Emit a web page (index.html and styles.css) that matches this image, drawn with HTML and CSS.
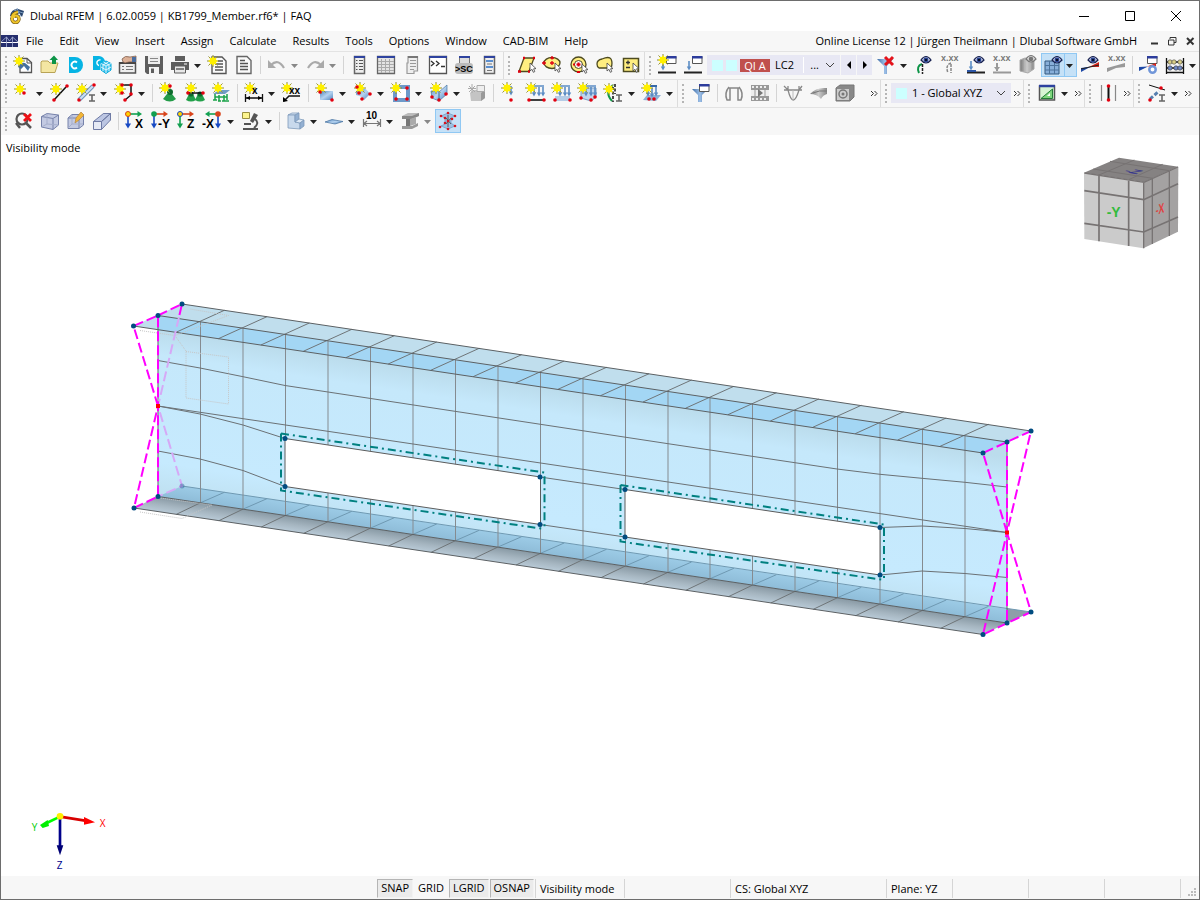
FILE: index.html
```html
<!DOCTYPE html>
<html lang="en">
<head>
<meta charset="utf-8">
<title>Dlubal RFEM | 6.02.0059 | KB1799_Member.rf6* | FAQ</title>
<link rel="stylesheet" href="styles.css">
</head>
<body>
<svg class="defs" width="0" height="0" aria-hidden="true">
  <defs>
    <linearGradient id="blue" x1="0" y1="0" x2="1" y2="1"><stop offset="0" stop-color="#4d83bd"/><stop offset=".5" stop-color="#b5d3f0"/><stop offset="1" stop-color="#4d83bd"/></linearGradient>
    <linearGradient id="funnelFill" x1="0" x2="1"><stop offset="0" stop-color="#3f6ea8"/><stop offset=".5" stop-color="#9dc0e8"/><stop offset="1" stop-color="#345f98"/></linearGradient>
    <linearGradient id="grey" x1="0" x2="1"><stop offset="0" stop-color="#777"/><stop offset=".5" stop-color="#ccc"/><stop offset="1" stop-color="#888"/></linearGradient>
    <g id="star"><path d="M0-6V6M-6 0H6M-4.500-4.500 4.500 4.500M-4.500 4.500 4.500-4.500" stroke="#8a8740" stroke-width="1"/><path d="M0-5 1.300-3 3.500-3.500 3-1.300 5 0 3 1.300 3.500 3.500 1.300 3 0 5-1.300 3-3.500 3.500-3 1.300-5 0-3-1.300-3.500-3.500-1.300-3Z" fill="#fff000"/></g>
    <g id="dot"><circle r="1.800" fill="#e3000f"/></g>
    <g id="eye"><path d="M-5 0Q0-7 5 0 0 6-5 0Z" fill="#c3cbe6" stroke="#16204f" stroke-width="1.200"/><circle r="2.400" fill="#27418f"/><circle r="1" fill="#000"/></g>
    <g id="eyeOff"><path d="M-5 0Q0-7 5 0 0 6-5 0Z" fill="#ddd" stroke="#777" stroke-width="1.200"/><circle r="2.300" fill="#777"/></g>
    <g id="win"><path d="M.5.500H10V7.500H.5Z" fill="#fff" stroke="#555"/><path d="M0 0H10.500V2.500H0Z" fill="#2c3c9c"/></g>
    <g id="cursor"><path d="M0 0V8L2 6.300 3.300 9.300 4.800 8.600 3.600 5.800 6 5.600Z" fill="#fff" stroke="#444" stroke-width=".8"/></g>
    <g id="ibeam"><path d="M0 0H6M0 6H6M3 0V6" stroke="#666" stroke-width="1.600" fill="none"/></g>
    <g id="drop"><path d="M0 0V7" stroke="#5b8cc4" stroke-width="1.600"/><path d="M-2.200 5.500H2.200L0 9.500Z" fill="#5b8cc4"/></g>
    <g id="caret"><path d="M1 4H8L4.500 8Z"/></g>
    <g id="more"><path d="M1 1 3.500 3.500 1 6M4.500 1 7 3.500 4.500 6" fill="none" stroke="#333"/></g>
    <g id="arrR"><path d="M0 0H10" stroke="currentColor" stroke-width="1.600"/><path d="M8.500-3 13 0 8.500 3Z" fill="currentColor"/></g>
    <g id="arrD"><path d="M0 0V10" stroke="currentColor" stroke-width="1.600"/><path d="M-3 8.500 0 13.500 3 8.500Z" fill="currentColor"/></g>
    <g id="cone"><path d="M-2-3H2L5 3Q0 6-5 3Z" fill="#22a04a"/><circle cy="-3" r="2.600" fill="#0c6b2c"/></g>
  </defs>
</svg>

<div class="window">
<header class="titlebar">
  <svg class="appicon" viewBox="0 0 16 16"><path d="M1 8Q2 1 9 1L15 3 13 9 10 5 7 9Z" fill="#28456d"/><path d="M5 2 14 5M3 5 12 8M8 0 10 6" stroke="#7c9cc0" fill="none"/><path d="M9 4Q3 5 3 10.500A3.500 3.500 0 1 0 6.500 7.500Q5 7.500 5 10" fill="none" stroke="#765a10" stroke-width="3.400"/><path d="M9 4Q3 5 3 10.500A3.500 3.500 0 1 0 6.500 7.500Q5 7.500 5 10" fill="none" stroke="#efc52b" stroke-width="2.200"/></svg>
  <h1>Dlubal RFEM | 6.02.0059 | KB1799_Member.rf6* | FAQ</h1>
  <div class="winbtns">
    <button aria-label="Minimize"><svg viewBox="0 0 12 12"><path d="M1 6.500H11"/></svg></button>
    <button aria-label="Maximize"><svg viewBox="0 0 12 12"><path d="M1.500 1.500H10.500V10.500H1.500Z"/></svg></button>
    <button aria-label="Close"><svg viewBox="0 0 12 12"><path d="M1 1 11 11M11 1 1 11"/></svg></button>
  </div>
</header>

<nav class="menubar" aria-label="Main menu">
  <svg class="docicon" viewBox="0 0 17 12"><path d="M0 0H17V12H0Z" fill="#252e6d"/><path d="M0 7.500H17" stroke="#fff" fill="none"/><path d="M5.500 2V12M11.500 2V12M5.500 2 0 7M5.500 2 8.500 6 11.500 2 17 7" stroke="#aab2d8" stroke-width=".8" fill="none"/></svg>
  <button>File</button><button>Edit</button><button>View</button><button>Insert</button><button>Assign</button><button>Calculate</button><button>Results</button><button>Tools</button><button>Options</button><button>Window</button><button>CAD-BIM</button><button>Help</button>
  <span class="license">Online License 12 | Jürgen Theilmann | Dlubal Software GmbH</span>
  <button class="mdi" aria-label="Minimize document"><svg viewBox="0 0 10 10"><path d="M2 7.500H9" stroke-width="2"/></svg></button>
  <button class="mdi" aria-label="Restore document"><svg viewBox="0 0 10 10"><path d="M3 3V1.500H9V6.500H7M1.500 4H7V9H1.500Z"/></svg></button>
  <button class="mdi" aria-label="Close document"><svg viewBox="0 0 10 10"><path d="M2 2 8.500 8.500M8.500 2 2 8.500" stroke-width="2"/></svg></button>
</nav>

<div class="toolbar">
  <div class="group">
    <button class="ic" aria-label="New model"><svg viewBox="0 0 22 22"><path d="M7 4.500H14L18.500 8.500V18.500H7Z" fill="#fff" stroke="#555" stroke-width="1.300"/><path d="M14 4V9H18" fill="none" stroke="#555"/><path d="M5 13Q6 8 12 9L17 13 15 17 11 12 8 15Z" fill="#45719f"/><use href="#star" x="6" y="7"/></svg></button>
    <button class="ic" aria-label="Open"><svg viewBox="0 0 22 22"><path d="M2 8V18.500H16L19 9H11L9 7H3Z" fill="#f4e6a2" stroke="#b8a356"/><path d="M13 10V6H10.500L15 1.500 19 6H17V10Z" fill="#0c9447"/></svg></button>
    <button class="ic" aria-label="Dlubal Center"><svg viewBox="0 0 22 22"><path d="M4 3H10A8 8 0 0 1 10 19H4Z" fill="#06b4e4"/><path d="M12 8.500A3.300 3.300 0 1 0 12 13.500" fill="none" stroke="#fff" stroke-width="1.800"/></svg></button>
    <button class="ic" aria-label="Model manager"><svg viewBox="0 0 22 22"><path d="M2 2H8A7 7 0 0 1 14 7L9 10V16H2Z" fill="#06b4e4"/><path d="M9.500 6A2.700 2.700 0 1 0 8 11.500" fill="none" stroke="#fff" stroke-width="1.400"/><path d="M15 7 20 9.500V16L15 19.500 10 16V9.500Z" fill="#35c0ec" stroke="#06a9dc"/><path d="M10 9.500 15 12 20 9.500M15 12V19M12.500 8 18 11V17M17.500 8 12 11V17M10 13 15 16 20 13" fill="none" stroke="#fff" stroke-width=".8"/></svg></button>
    <button class="ic" aria-label="Block manager"><svg viewBox="0 0 22 22"><path d="M2.500 9H18.500V19H2.500Z" fill="#eee" stroke="#555" stroke-width="1.500"/><path d="M2 9H19" stroke="#444" stroke-width="2"/><path d="M5 5Q8 1 13 3L19 2V8H12L8 9 6 8Z" fill="#dcb096" stroke="#705040" stroke-width=".7"/><path d="M15 3H19V8H15Z" fill="#4a6ea0"/><path d="M5 12.500H7M5 15.500H7M9 12.500H16M9 15.500H16" stroke="#777"/></svg></button>
    <button class="ic" aria-label="Save"><svg viewBox="0 0 22 22"><path d="M2 2H20V20H4L2 18Z" fill="#5e5e5e"/><path d="M5 2H17V10H5Z" fill="#eee"/><path d="M7 4.500H15M7 7.500H15" stroke="#888" stroke-width="1.200"/><path d="M6 13H16V20H6Z" fill="#f3f3f3"/><path d="M8 14.500H11V19H8Z" fill="#5e5e5e"/></svg></button>
    <button class="ic" aria-label="Print"><svg viewBox="0 0 22 22"><path d="M6 2H16V7H6Z" fill="#5e5e5e"/><path d="M2 8H20V16H2Z" fill="#5e5e5e"/><path d="M5.500 12H16.500V19H5.500Z" fill="#e8e8e8" stroke="#5e5e5e"/><path d="M7 15H15" stroke="#5e5e5e" stroke-width="1.500"/><path d="M15 10H18" stroke="#fff"/></svg></button>
    <button class="dd" aria-label="Print options"><svg viewBox="0 0 9 11"><use href="#caret"/></svg></button>
    <button class="ic" aria-label="New report"><svg viewBox="0 0 22 22"><path d="M5 3H15L19 7V19.500H5Z" fill="#fafafa" stroke="#555" stroke-width="1.400"/><path d="M11 7H16M8 10H16M8 13H16M8 16H16" stroke="#555" stroke-width="1.300"/><use href="#star" x="6" y="7"/></svg></button>
    <button class="ic" aria-label="Report"><svg viewBox="0 0 22 22"><path d="M4 2.500H14L18 6.500V19.500H4Z" fill="#fafafa" stroke="#666" stroke-width="1.400"/><path d="M7 6.500H12M7 9.500H15M7 12.500H15M7 15.500H15" stroke="#555" stroke-width="1.300"/></svg></button>
    <span class="sep"></span>
    <button class="ic" aria-label="Undo"><svg viewBox="0 0 22 22"><path d="M5 11Q12 4 18 14" fill="none" stroke="#aaa" stroke-width="2.200"/><path d="M2 6V14H10Z" fill="#aaa"/></svg></button>
    <button class="dd off" aria-label="Undo list"><svg viewBox="0 0 9 11"><use href="#caret"/></svg></button>
    <button class="ic" aria-label="Redo"><svg viewBox="0 0 22 22"><path d="M17 11Q10 4 4 14" fill="none" stroke="#aaa" stroke-width="2.200"/><path d="M20 6V14H12Z" fill="#aaa"/></svg></button>
    <button class="dd off" aria-label="Redo list"><svg viewBox="0 0 9 11"><use href="#caret"/></svg></button>
    <span class="sep"></span>
    <button class="ic" aria-label="Navigator"><svg viewBox="0 0 22 22"><path d="M5.500 2.500H15.500V19.500H5.500Z" fill="#eee" stroke="#666" stroke-width="1.500"/><path d="M5 3H16" stroke="#2e439f" stroke-width="2"/><path d="M7 6.500H8.500M7 9.500H8.500M7 12.500H8.500M7 15.500H8.500M10 6.500H14M10 9.500H14M10 12.500H14M10 15.500H14" stroke="#555"/></svg></button>
    <button class="ic" aria-label="Tables"><svg viewBox="0 0 22 22"><path d="M2.500 2.500H19.500V19.500H2.500Z" fill="#e4e4e4" stroke="#666" stroke-width="1.300"/><path d="M2 3H20" stroke="#2e439f" stroke-width="2"/><path d="M3 7.500H19M3 10.500H19M3 13.500H19M3 16.500H19M6.500 5V19M10.500 5V19M14.500 5V19" stroke="#aaa"/></svg></button>
    <button class="ic" aria-label="Table navigator"><svg viewBox="0 0 22 22"><path d="M7 2.500H16.500V17H13V19.500H6V9H7Z" fill="#eee" stroke="#999" stroke-width="1.200"/><path d="M7 3H17" stroke="#777" stroke-width="2"/><path d="M9 6.500H15M9 9.500H15M9 12.500H15M9 15.500H13" stroke="#999"/></svg></button>
    <button class="ic" aria-label="Console"><svg viewBox="0 0 22 22"><path d="M2.500 2.500H19.500V19.500H2.500Z" fill="#fff" stroke="#555" stroke-width="1.300"/><path d="M2 3H20" stroke="#2e439f" stroke-width="2"/><path d="M4 7 7 9.500 4 12M9 7 12 9.500 9 12M14 12.500H18" fill="none" stroke="#333" stroke-width="1.300"/></svg></button>
    <button class="ic" aria-label="Script console"><svg viewBox="0 0 22 22"><path d="M6.500 2.500H16.500V10H6.500Z" fill="#ddd" stroke="#777"/><path d="M6 3H17" stroke="#2e439f" stroke-width="2"/><rect x="2" y="9" width="18" height="11" rx="3" fill="#bbb"/><text class="tiny" x="2" y="18">&gt;SC</text></svg></button>
    <button class="ic" aria-label="Control panel"><svg viewBox="0 0 22 22"><path d="M5.500 2.500H15.500V19.500H5.500Z" fill="#eee" stroke="#666" stroke-width="1.500"/><path d="M5 3H16" stroke="#2e439f" stroke-width="2"/><path d="M7 7H14M7 13H14" stroke="#5b8fd0" stroke-width="2"/><path d="M8 10H13M8 16.500H13" stroke="#777"/></svg></button>
  </div>
  <div class="group">
    <button class="ic" aria-label="Select by rectangle"><svg viewBox="0 0 22 22"><path d="M3 17.500 8 4H18L13 17.500Z" fill="#ffee80" stroke="#4e4b20" stroke-width="1.300"/><path d="M2 17.500H5M7 4H9M17 4H19M12 17.500H14" stroke="#e00010" stroke-width="2.600"/><use href="#cursor" x="14" y="9"/></svg></button>
    <button class="ic" aria-label="Select by ellipse"><svg viewBox="0 0 22 22"><ellipse cx="10" cy="9" rx="8" ry="5.500" fill="#ffee80" stroke="#4e4b20" stroke-width="1.300"/><path d="M0 9H4M2 7V11M10 2V5.500M8.500 4H12M8 9H12M10 7V11" stroke="#e00010" stroke-width="1.300"/><use href="#cursor" x="13" y="9"/></svg></button>
    <button class="ic" aria-label="Select by ring"><svg viewBox="0 0 22 22"><circle cx="10.500" cy="10.500" r="7.500" fill="#ffee80" stroke="#4e4b20" stroke-width="1.300"/><circle cx="10.500" cy="10.500" r="4" fill="#fff" stroke="#4e4b20"/><path d="M8.500 10.500H12.500M10.500 8.500V12.500M5 10.500H7M9 18H12" stroke="#e00010" stroke-width="2"/><use href="#cursor" x="14" y="10"/></svg></button>
    <button class="ic" aria-label="Select by lasso"><svg viewBox="0 0 22 22"><path d="M3 10Q3 6 8 5 15 2 17 5 19 9 17 14L5 14Q3 13 3 10Z" fill="#ffee80" stroke="#4e4b20" stroke-width="1.300"/><use href="#cursor" x="13" y="9"/></svg></button>
    <button class="ic" aria-label="Special selection"><svg viewBox="0 0 22 22"><path d="M3.500 4.500H18.500V17.500H3.500Z" fill="#ffee80" stroke="#4e4b20" stroke-width="1.500"/><path d="M6 8.500H10M8 6.500V10.500M6 13.500H10" stroke="#333" stroke-width="1.300"/><use href="#cursor" x="13" y="9"/></svg></button>
  </div>
  <div class="group">
    <button class="ic" aria-label="New load case"><svg viewBox="0 0 22 22"><use href="#win" x="9" y="2"/><use href="#drop" x="6" y="7"/><path d="M1 18.500H19" stroke="#222" stroke-width="2"/><use href="#star" x="6" y="6"/></svg></button>
    <button class="ic" aria-label="Load cases"><svg viewBox="0 0 22 22"><use href="#win" x="9" y="2"/><use href="#drop" x="6" y="7"/><path d="M1 18.500H19" stroke="#222" stroke-width="2"/></svg></button>
    <label class="combo lc"><i class="swatch"></i><i class="swatch"></i><b class="badge">QI A</b><select aria-label="Load case"><option>LC2</option></select><span class="dots">...</span><svg class="chev" viewBox="0 0 10 10"><path d="M1 3 5 7 9 3"/></svg></label>
    <button class="step" aria-label="Previous load case"><svg viewBox="0 0 6 8"><path d="M5 0V8L1 4Z"/></svg></button>
    <button class="step" aria-label="Next load case"><svg viewBox="0 0 6 8"><path d="M1 0V8L5 4Z"/></svg></button>
    <button class="ic" aria-label="Clear filter"><svg viewBox="0 0 22 22"><path d="M2 5H18L12 12V20H9V12Z" fill="url(#funnelFill)"/><path d="M10 3 18 11M18 3 10 11" stroke="#e4131b" stroke-width="3"/></svg></button>
    <button class="dd" aria-label="Filter list"><svg viewBox="0 0 9 11"><use href="#caret"/></svg></button>
    <button class="ic" aria-label="Show loads"><svg viewBox="0 0 22 22"><path d="M9 10Q3 12 6 19" fill="none" stroke="#0c9447" stroke-width="2"/><path d="M9.500 10V20" stroke="#222" stroke-width="1.500" stroke-dasharray="3 1"/><use href="#eye" x="13" y="6"/></svg></button>
    <button class="ic" aria-label="Show load values"><svg viewBox="0 0 22 22"><text class="xs" x="2" y="7">x.xx</text><path d="M12 9Q6 11 9 19M12 10V19" fill="none" stroke="#888" stroke-width="1.500" stroke-dasharray="3 1"/></svg></button>
    <button class="ic" aria-label="Show result loads"><svg viewBox="0 0 22 22"><use href="#drop" x="6" y="7"/><path d="M2 18.500H20" stroke="#222" stroke-width="2"/><path d="M2 17H11" stroke="#2c55a5" stroke-width="2"/><use href="#eye" x="14" y="6"/></svg></button>
    <button class="ic" aria-label="Show result values"><svg viewBox="0 0 22 22"><text class="xs" x="2" y="7">x.xx</text><path d="M6 9V17M2 18.500H20" stroke="#999" stroke-width="2"/><path d="M3 13H9L6 17Z" fill="#999"/></svg></button>
    <button class="ic" aria-label="Show solids"><svg viewBox="0 0 22 22"><path d="M3 6 8 4 17 6V15L11 19 3 17Z" fill="url(#grey)" stroke="#aaa"/><path d="M8 6V18M13 6V18" stroke="#bbb"/><use href="#eyeOff" x="14" y="5"/></svg></button>
    <span class="split"><button class="ic" aria-label="Show mesh"><svg viewBox="0 0 22 22"><path d="M3 7H17V20H3Z" fill="#88afd9" stroke="#33597f"/><path d="M7.500 7V20M12.500 7V20M3 11.500H17M3 16H17" stroke="#4c739c"/><use href="#eye" x="15" y="6"/></svg></button><button class="dd" aria-label="Mesh options"><svg viewBox="0 0 9 11"><use href="#caret"/></svg></button></span>
    <button class="ic" aria-label="Show results"><svg viewBox="0 0 22 22"><path d="M2 18V14L12 12.500Z" fill="#1e49a6"/><path d="M10 13 20 8V13Z" fill="#d8261c"/><path d="M2 15 20 11" stroke="#222"/><use href="#eye" x="14" y="6"/></svg></button>
    <button class="ic" aria-label="Show diagrams values"><svg viewBox="0 0 22 22"><text class="xs" x="3" y="7">x.xx</text><path d="M2 18V14L20 9V13L11 14Z" fill="#999"/></svg></button>
    <span class="sep"></span>
    <button class="ic" aria-label="Calculation settings"><svg viewBox="0 0 22 22"><use href="#win" x="9" y="2"/><path d="M1 17V13L10 12.500Z" fill="#1e49a6"/><path d="M9 12.500 18 9V12Z" fill="#d8261c"/><circle cx="14.500" cy="15.500" r="3.200" fill="#fff" stroke="#7196d9" stroke-width="2.500"/></svg></button>
    <button class="ic" aria-label="Calculate all"><svg viewBox="0 0 22 22"><path d="M2.500 4V20M19.500 4V20M2 8H20M2 14H20M2 18.500H20" stroke="#111" stroke-width="1.300"/><g fill="#d9ce86" stroke="#444" stroke-width=".6"><circle cx="6" cy="8" r="2.200"/><circle cx="10" cy="8" r="2.200"/><circle cx="16" cy="8" r="2.200"/></g><g fill="#6f88c6" stroke="#333" stroke-width=".6"><circle cx="6" cy="14" r="2.200"/><circle cx="12" cy="14" r="2.200"/><circle cx="16" cy="14" r="2.200"/></g></svg></button>
    <button class="dd" aria-label="Calculation list"><svg viewBox="0 0 9 11"><use href="#caret"/></svg></button>
  </div>
</div>

<div class="toolbar">
  <div class="group">
    <button class="ic narrow" aria-label="New node"><svg viewBox="0 0 22 22"><use href="#star" x="8" y="7"/><use href="#dot" x="12" y="11"/></svg></button>
    <button class="dd" aria-label="Node types"><svg viewBox="0 0 9 11"><use href="#caret"/></svg></button>
    <button class="ic" aria-label="New line"><svg viewBox="0 0 22 22"><path d="M5 18 17 5" stroke="#111" stroke-width="1.500"/><use href="#dot" x="5" y="18"/><use href="#dot" x="18" y="4"/><use href="#star" x="7" y="7"/></svg></button>
    <button class="ic" aria-label="New member"><svg viewBox="0 0 22 22"><path d="M4 18 18 4" stroke="#7093b8" stroke-width="4"/><path d="M4 18 18 4" stroke="#cbe0f7" stroke-width="2"/><use href="#dot" x="4" y="18"/><use href="#dot" x="19" y="3"/><use href="#star" x="7" y="7"/><use href="#ibeam" x="14" y="13"/></svg></button>
    <button class="dd" aria-label="Member types"><svg viewBox="0 0 9 11"><use href="#caret"/></svg></button>
    <button class="ic" aria-label="New member set"><svg viewBox="0 0 22 22"><path d="M9 10V3H18V13L12 18" fill="none" stroke="#111" stroke-width="1.500"/><use href="#star" x="7" y="7"/><use href="#dot" x="9" y="11"/><use href="#dot" x="9" y="3"/><use href="#dot" x="18" y="3"/><use href="#dot" x="18" y="12"/><use href="#dot" x="12" y="18"/></svg></button>
    <button class="dd" aria-label="Member set types"><svg viewBox="0 0 9 11"><use href="#caret"/></svg></button>
    <span class="sep"></span>
    <button class="ic" aria-label="New nodal support"><svg viewBox="0 0 22 22"><path d="M5 17 9 12H14L18 17Q12 22 5 17Z" fill="#239b48"/><circle cx="12" cy="10" r="3" fill="#0c6b2c"/><use href="#star" x="7" y="6"/><use href="#dot" x="12" y="4"/></svg></button>
    <button class="ic" aria-label="New line support"><svg viewBox="0 0 22 22"><use href="#cone" x="7" y="15"/><use href="#cone" x="16" y="15"/><path d="M4 11H19" stroke="#111" stroke-width="1.500"/><use href="#star" x="7" y="6"/><use href="#dot" x="4" y="11"/><use href="#dot" x="19" y="11"/></svg></button>
    <button class="ic" aria-label="New surface support"><svg viewBox="0 0 22 22"><path d="M5 12V18M9 13V19M14 13V19M17 12V18M3 18H7M8 19H11M12 19H19M5 15H17" stroke="#1ba34a" stroke-width="1.500"/><path d="M3 12 9 8H20L15 12Z" fill="#6f9cc5"/><use href="#star" x="8" y="6"/></svg></button>
    <span class="sep"></span>
    <button class="ic" aria-label="New dimension"><svg viewBox="0 0 22 22"><path d="M2.500 12V20M19.500 12V20M3 16H19" stroke="#111" stroke-width="1.300"/><path d="M3 16 7 14V18ZM19 16 15 14V18Z"/><use href="#star" x="7" y="6"/><text class="xx" x="9" y="12">x</text></svg></button>
    <button class="dd" aria-label="Dimension types"><svg viewBox="0 0 9 11"><use href="#caret"/></svg></button>
    <button class="ic" aria-label="New note"><svg viewBox="0 0 22 22"><path d="M19 14H8L3 19" fill="none" stroke="#111" stroke-width="1.500"/><path d="M2 20V15L7 19Z"/><use href="#star" x="6" y="6"/><text class="xx" x="8" y="12">xx</text></svg></button>
    <span class="sep"></span>
    <button class="ic" aria-label="New surface"><svg viewBox="0 0 22 22"><path d="M6 9H19V18H6Z" fill="url(#blue)"/><use href="#star" x="7" y="6"/><use href="#dot" x="6" y="10"/><use href="#dot" x="18" y="18"/></svg></button>
    <button class="dd" aria-label="Surface types"><svg viewBox="0 0 9 11"><use href="#caret"/></svg></button>
    <button class="ic" aria-label="New curved surface"><svg viewBox="0 0 22 22"><path d="M4 10Q11 1 18 12L12 18Q10 14 4 13Z" fill="url(#blue)"/><use href="#star" x="8" y="6"/><use href="#dot" x="5" y="5"/><use href="#dot" x="7" y="11"/><use href="#dot" x="18" y="12"/><use href="#dot" x="10" y="17"/></svg></button>
    <button class="dd" aria-label="Curved surface types"><svg viewBox="0 0 9 11"><use href="#caret"/></svg></button>
    <button class="ic" aria-label="New opening"><svg viewBox="0 0 22 22"><path d="M5 5H18V18H5Z" fill="#fff" stroke="#6d9aca" stroke-width="4"/><use href="#dot" x="6" y="17"/><use href="#dot" x="17" y="17"/><use href="#dot" x="17" y="6"/><use href="#star" x="6" y="6"/></svg></button>
    <button class="dd" aria-label="Opening types"><svg viewBox="0 0 9 11"><use href="#caret"/></svg></button>
    <button class="ic" aria-label="New solid"><svg viewBox="0 0 22 22"><path d="M3 9H11V19L4 16ZM11 10 19 3V12L11 19Z" fill="url(#blue)" stroke="#4876a5" stroke-width=".7"/><use href="#star" x="8" y="6"/><use href="#dot" x="4" y="15"/><use href="#dot" x="11" y="18"/><use href="#dot" x="18" y="12"/></svg></button>
    <button class="dd" aria-label="Solid types"><svg viewBox="0 0 9 11"><use href="#caret"/></svg></button>
    <button class="ic" aria-label="New solid set"><svg viewBox="0 0 22 22"><path d="M4 11 7 8H19V16L15 19H5Z" fill="#c4c4c4"/><path d="M15 11 19 8V16L15 19Z" fill="#999"/><path d="M11 3.500H18.500V9.500H11Z" fill="#eee" stroke="#aaa"/><path d="M6 2V11M2 6.500H10M3 4 9 10M9 4 3 10" stroke="#aaa"/></svg></button>
    <span class="sep"></span>
    <button class="ic" aria-label="New nodal load"><svg viewBox="0 0 22 22"><use href="#drop" x="12" y="4"/><use href="#dot" x="12" y="18"/><use href="#star" x="8" y="6"/></svg></button>
    <button class="ic" aria-label="New member load"><svg viewBox="0 0 22 22"><path d="M7 4H19" stroke="#5b8cc4" stroke-width="1.500"/><use href="#drop" x="9" y="5"/><use href="#drop" x="14" y="5"/><use href="#drop" x="18" y="5"/><path d="M4 18H19" stroke="#111" stroke-width="1.600"/><use href="#dot" x="4" y="18"/><use href="#dot" x="19" y="18"/><use href="#star" x="6" y="6"/></svg></button>
    <button class="ic" aria-label="New surface load"><svg viewBox="0 0 22 22"><path d="M4 14H19V19H4Z" fill="#b5cce6"/><path d="M7 4H19" stroke="#5b8cc4" stroke-width="1.500"/><use href="#drop" x="9" y="5"/><use href="#drop" x="14" y="5"/><use href="#drop" x="18" y="5"/><use href="#dot" x="4" y="18"/><use href="#dot" x="19" y="18"/><use href="#star" x="6" y="6"/></svg></button>
    <button class="ic" aria-label="New solid load"><svg viewBox="0 0 22 22"><path d="M4 9 10 6H19V15L14 19 4 16Z" fill="#c1d5ec" stroke="#7d9fc4"/><path d="M7 4H19" stroke="#5b8cc4" stroke-width="1.500"/><use href="#drop" x="9" y="5"/><use href="#drop" x="14" y="5"/><use href="#drop" x="18" y="5"/><use href="#dot" x="4" y="16"/><use href="#dot" x="14" y="18"/><use href="#dot" x="18" y="15"/><use href="#star" x="6" y="6"/></svg></button>
    <button class="ic" aria-label="New imperfection"><svg viewBox="0 0 22 22"><path d="M10 3Q1 10 9 19" fill="none" stroke="#109a48" stroke-width="2"/><path d="M10 5V20M12 2V12" stroke="#111" stroke-width="1.500" stroke-dasharray="3 1.500"/><use href="#star" x="6" y="7"/><use href="#ibeam" x="13" y="13"/></svg></button>
    <button class="dd" aria-label="Imperfection types"><svg viewBox="0 0 9 11"><use href="#caret"/></svg></button>
    <button class="ic" aria-label="Load wizard"><svg viewBox="0 0 22 22"><path d="M2 18 6 13H20L15 19Z" fill="#8eb1d6"/><path d="M7 4H16" stroke="#3568a8" stroke-width="2"/><use href="#drop" x="7" y="5"/><use href="#drop" x="11" y="6"/><use href="#drop" x="15" y="5"/><use href="#dot" x="8" y="17"/><use href="#dot" x="13" y="17"/><use href="#star" x="6" y="6"/></svg></button>
    <button class="dd" aria-label="Load wizard types"><svg viewBox="0 0 9 11"><use href="#caret"/></svg></button>
  </div>
  <div class="group">
    <button class="ic" aria-label="Filter"><svg viewBox="0 0 22 22"><path d="M2 7H18L12 13V20H8V13Z" fill="url(#funnelFill)"/><use href="#win" x="9" y="2"/></svg></button>
    <span class="sep"></span>
    <button class="ic" aria-label="Deformation"><svg viewBox="0 0 22 22"><path d="M6 6H16M6 5Q1 11 4 18H7V6M16 5Q21 11 18 18H15V6" fill="none" stroke="#888" stroke-width="1.500"/></svg></button>
    <button class="ic" aria-label="Animation"><svg viewBox="0 0 22 22"><path d="M2 3H20V19H2Z" fill="#999"/><path d="M3 5H19M3 17H19" stroke="#eee" stroke-width="2" stroke-dasharray="2 2"/><path d="M2 8H20V14H2Z" fill="#eee"/><path d="M9 7 14 11 9 15Z" fill="#777"/><path d="M6 7V15M16 7V15" stroke="#999"/></svg></button>
    <span class="sep"></span>
    <button class="ic" aria-label="Member diagram"><svg viewBox="0 0 22 22"><path d="M2 4 6 8V4M20 4 17 8V4M2 8H20M6 8Q11 28 17 8" fill="none" stroke="#888" stroke-width="1.300"/><path d="M11 8V18" stroke="#bbb"/></svg></button>
    <button class="ic" aria-label="Surface results"><svg viewBox="0 0 22 22"><path d="M2 12Q8 5 19 6V12Q15 13 13 17 9 12 2 12Z" fill="url(#grey)"/><path d="M5 11Q11 8 19 9" stroke="#777" fill="none"/></svg></button>
    <button class="ic" aria-label="Solid results"><svg viewBox="0 0 22 22"><path d="M2 6 6 3H20V15L16 19H2Z" fill="#888" stroke="#777"/><path d="M3 7H15V18H3Z" fill="#ccc"/><circle cx="9" cy="12" r="4" fill="none" stroke="#777" stroke-width="1.500"/><circle cx="9" cy="12" r="1.500" fill="#777"/></svg></button>
    <button class="ov spaced" aria-label="More results"><svg viewBox="0 0 8 7"><use href="#more"/></svg></button>
  </div>
  <div class="group">
    <label class="combo cs"><i class="swatch"></i><select aria-label="Coordinate system"><option>1 - Global XYZ</option></select><svg class="chev" viewBox="0 0 10 10"><path d="M1 3 5 7 9 3"/></svg></label>
    <button class="ov" aria-label="More coordinate systems"><svg viewBox="0 0 8 7"><use href="#more"/></svg></button>
  </div>
  <div class="group">
    <button class="ic" aria-label="Work plane"><svg viewBox="0 0 22 22"><path d="M3.500 4H18.500V18H3.500Z" fill="#d8f5d4" stroke="#555" stroke-width="1.500"/><path d="M3 4H19" stroke="#2e439f" stroke-width="2.500"/><path d="M5 16.500 16.500 7V16.500Z" fill="#7ed67c" stroke="#257c38"/><path d="M11 14 14 11V14Z" fill="#fff"/></svg></button>
    <button class="dd" aria-label="Work plane list"><svg viewBox="0 0 9 11"><use href="#caret"/></svg></button>
    <button class="ov" aria-label="More planes"><svg viewBox="0 0 8 7"><use href="#more"/></svg></button>
  </div>
  <div class="group">
    <button class="ic" aria-label="Snap guides"><svg viewBox="0 0 22 22"><path d="M4.500 3V19M18.500 3V19" stroke="#888" stroke-width="1.200"/><path d="M11.500 4V18" stroke="#111" stroke-width="2"/><use href="#dot" x="11.500" y="4"/><use href="#dot" x="11.500" y="18"/></svg></button>
    <button class="ov" aria-label="More guides"><svg viewBox="0 0 8 7"><use href="#more"/></svg></button>
  </div>
  <div class="group">
    <button class="ic" aria-label="Member generator"><svg viewBox="0 0 22 22"><path d="M3 3 19 8" stroke="#111"/><path d="M4 17 13 9" stroke="#557eaf" stroke-width="3" stroke-dasharray="4 2"/><use href="#dot" x="15" y="6"/><use href="#dot" x="4" y="18"/><use href="#ibeam" x="13" y="13"/></svg></button>
    <button class="dd" aria-label="Generators"><svg viewBox="0 0 9 11"><use href="#caret"/></svg></button>
    <button class="ov" aria-label="More generators"><svg viewBox="0 0 8 7"><use href="#more"/></svg></button>
  </div>
</div>

<div class="toolbar">
  <div class="group">
    <button class="ic" aria-label="Cancel zoom"><svg viewBox="0 0 22 22"><circle cx="9" cy="9" r="5.500" fill="none" stroke="#555" stroke-width="2.200"/><path d="M13 13 18 18M3 13 7 18" stroke="#555" stroke-width="2.500"/><path d="M11 4 18 11M18 4 11 11" stroke="#ef1015" stroke-width="2.800"/></svg></button>
    <button class="ic" aria-label="Full view"><svg viewBox="0 0 22 22"><g fill="#c3cae2" stroke="#7682aa"><path d="M2.500 6.500 8 3.500 19.500 5V15L14 19.500 2.500 17Z"/><path d="M2.500 6.500 14 8.500 19.500 5M14 9V19" fill="none"/><path d="M8 3.500V14L2.500 17M8 14 19.500 15" fill="none" stroke="#a5aecb"/></g></svg></button>
    <button class="ic" aria-label="Edit view"><svg viewBox="0 0 22 22"><path d="M3 8 7 4.500H18.500V15L14 18.500H3Z" fill="#c3cae2" stroke="#7682aa"/><path d="M3 8H14V18M14 8 18 5" fill="none" stroke="#7682aa"/><path d="M7 5V14H18M7 14 3 18" fill="none" stroke="#a5aecb"/><path d="M10 13 11 8 16 2 19 5 14 10Z" fill="#f2b535" stroke="#b98c45" stroke-width=".8"/></svg></button>
    <button class="ic" aria-label="Perspective"><svg viewBox="0 0 22 22"><path d="M12.500 3.500H19.500V10H12.500Z" fill="#c3cae2" stroke="#6f7ba5"/><path d="M2.500 11.500 12.500 3.500H19.500L10.500 11.500ZM10.500 11.500 19.500 3.500V10L10.500 19.500Z" fill="#bcc6e3" stroke="#6f7ba5"/><path d="M2.500 11.500H10.500V19.500H2.500Z" fill="#e6eaf5" stroke="#6f7ba5"/></svg></button>
    <span class="sep"></span>
    <button class="ic" aria-label="View in X"><svg viewBox="0 0 22 22"><g color="#12a050"><use href="#arrR" x="5" y="4"/></g><g color="#1749c3"><use href="#arrD" x="4" y="5"/></g><circle cx="4" cy="4" r="2.500" fill="#ffd400" stroke="#d8441b"/><text class="axis" x="11" y="18">X</text></svg></button>
    <button class="ic" aria-label="View against Y"><svg viewBox="0 0 22 22"><g color="#d8441b"><use href="#arrR" x="5" y="4"/></g><g color="#1749c3"><use href="#arrD" x="4" y="5"/></g><circle cx="4" cy="4" r="2.800" fill="#12a050"/><text class="axis" x="8" y="18">-Y</text></svg></button>
    <button class="ic" aria-label="View in Z"><svg viewBox="0 0 22 22"><g color="#d8441b"><use href="#arrR" x="5" y="4"/></g><g color="#12a050"><use href="#arrD" x="4" y="5"/></g><circle cx="4" cy="4" r="2.500" fill="#ffd400" stroke="#1749c3"/><text class="axis" x="11" y="18">Z</text></svg></button>
    <button class="ic" aria-label="View against X"><svg viewBox="0 0 22 22"><g color="#12a050"><use href="#arrR" transform="translate(16 4) rotate(180)"/></g><g color="#1749c3"><use href="#arrD" x="16" y="5"/></g><circle cx="16" cy="4" r="2.800" fill="#d8441b"/><text class="axis" x="0" y="18">-X</text></svg></button>
    <button class="dd" aria-label="View list"><svg viewBox="0 0 9 11"><use href="#caret"/></svg></button>
    <button class="ic" aria-label="Visibility"><svg viewBox="0 0 22 22"><path d="M14 3 18 5 13 13 10 11Z" fill="#555"/><path d="M15 9Q20 13 14 18M4 14H11M3 19H18" fill="none" stroke="#555" stroke-width="2"/><path d="M2.500 2.500H9.500V8.500H2.500Z" fill="#fdf58e" stroke="#999040"/></svg></button>
    <button class="dd" aria-label="Visibility list"><svg viewBox="0 0 9 11"><use href="#caret"/></svg></button>
    <span class="sep"></span>
    <button class="ic" aria-label="Render mode"><svg viewBox="0 0 22 22"><g stroke="#7d9abb" stroke-width=".8" stroke-linejoin="round"><path d="M3 5 7 3H14L10 5Z" fill="#dce8f5"/><path d="M3 5H10V12L15 13V19L3 18Z" fill="#c8d9ec"/><path d="M10 5 14 3V9L10 12Z" fill="#93b0d2"/><path d="M10 12 14 9 19 10 15 13Z" fill="#dce8f5"/><path d="M15 13 19 10V16L15 19Z" fill="#93b0d2"/></g></svg></button>
    <button class="dd" aria-label="Render modes"><svg viewBox="0 0 9 11"><use href="#caret"/></svg></button>
    <button class="ic" aria-label="Surface display"><svg viewBox="0 0 22 22"><path d="M2 12 9 9.500 20 11.500 12 14Z" fill="url(#blue)" stroke="#426f9d" stroke-width=".7"/></svg></button>
    <button class="dd" aria-label="Surface display list"><svg viewBox="0 0 9 11"><use href="#caret"/></svg></button>
    <button class="ic" aria-label="Dimension display"><svg viewBox="0 0 22 22"><path d="M2.500 9V17M19.500 9V17M3 13.500H19M6 11 3 13.500 6 16M16 11 19 13.500 16 16" fill="none" stroke="#777" stroke-width="1.200"/><text class="num" x="5" y="9">10</text></svg></button>
    <button class="dd" aria-label="Dimension display list"><svg viewBox="0 0 9 11"><use href="#caret"/></svg></button>
    <button class="ic" aria-label="Section display"><svg viewBox="0 0 22 22"><path d="M3 6 9 3H20V6L13 8H3Z" fill="#bbb"/><path d="M3 6H13L20 3V6L13 9H3Z" fill="#888"/><path d="M7 9H11V16H7Z" fill="#777"/><path d="M11 9 17 7V14L11 16Z" fill="#aaa"/><path d="M3 16H13L19 13V16L13 19H3Z" fill="#999"/></svg></button>
    <button class="dd off" aria-label="Section display list"><svg viewBox="0 0 9 11"><use href="#caret"/></svg></button>
    <button class="ic on" aria-label="Surface model from member"><svg viewBox="0 0 22 22"><path d="M4 6 11 3 18 6 14 8V13L18 16 11 19 4 16 8 14V8Z" fill="#9dc1e2" stroke="#6f97c0" stroke-width=".7"/><path d="M9 8 14 14M14 8 9 14M11 5V17" stroke="#444" stroke-width=".8"/><g fill="#d8151f"><circle cx="4" cy="6" r="1.300"/><circle cx="11" cy="3" r="1.300"/><circle cx="18" cy="6" r="1.300"/><circle cx="8" cy="8" r="1.300"/><circle cx="15" cy="9" r="1.300"/><circle cx="11" cy="11" r="1.300"/><circle cx="8" cy="13" r="1.300"/><circle cx="3" cy="17" r="1.300"/><circle cx="11" cy="19" r="1.300"/><circle cx="18" cy="16" r="1.300"/></g></svg></button>
  </div>
</div>

<main class="canvas">
  <svg class="model" viewBox="1 135 1198 741" role="img" aria-label="Beam surface model with two openings">
    <defs>
      <linearGradient id="webFill" gradientUnits="userSpaceOnUse" x1="545" y1="388" x2="521" y2="549"><stop offset="0" stop-color="#bbdcec"/><stop offset=".15" stop-color="#c5e8fb"/><stop offset=".8" stop-color="#c6eafe"/><stop offset="1" stop-color="#bfe0f0"/></linearGradient>
      <linearGradient id="footFill" gradientUnits="userSpaceOnUse" x1="502" y1="547.800" x2="499.600" y2="563.900"><stop offset="0" stop-color="#8899a4"/><stop offset=".5" stop-color="#a6b6c1"/><stop offset="1" stop-color="#bccedb"/></linearGradient>
      <linearGradient id="rearFill" gradientUnits="userSpaceOnUse" x1="502" y1="533.600" x2="499.900" y2="547.700"><stop offset="0" stop-color="#9ccbe6"/><stop offset="1" stop-color="#8ebcd8"/></linearGradient>
    </defs>
    <path d="M133.500 326 182 304 1031 431 983 453Z" fill="#c0deed"/>
    <path d="M158 315.500 1007 442V623L158 496.500Z" fill="url(#webFill)"/>
    <path d="M158 315.500 1007 442 983 453 158 329.700Z" fill="#a3d6f4"/>
    <path d="M182 486 1007 609V623L158 496.500Z" fill="url(#rearFill)"/>
    <path d="M1007 608.500 1031 612 1007 623Z" fill="#8d9ea9"/>
    <path d="M134 508 158 496.500 1007 623 983 634.500Z" fill="url(#footFill)"/>
    <g class="rib">
      <path d="M176 332.300 224.400 310.300M218.400 338.700 266.900 316.700M260.900 345 309.300 323M303.300 351.300 351.800 329.300M345.800 357.700 394.300 335.700M388.200 364 436.700 342M430.700 370.300 479.200 348.300M473.100 376.700 521.600 354.700M515.600 383 564.100 361M558 389.300 606.500 367.300M600.500 395.700 649 373.700M643 402 691.500 380M685.400 408.300 733.900 386.300M727.900 414.700 776.400 392.700M770.300 421 818.800 399M812.800 427.300 861.300 405.300M855.200 433.700 903.700 411.700M897.700 440 946.200 418M940.100 446.300 988.600 424.300"/>
      <path d="M176.400 514.300 200.400 502.800M218.900 520.700 242.900 509.200M261.300 527 285.300 515.500M303.800 533.300 327.800 521.800M346.300 539.700 370.300 528.200M388.700 546 412.700 534.500M431.200 552.300 455.200 540.800M473.600 558.700 497.600 547.200M516.100 565 540.100 553.500M558.500 571.300 582.500 559.800M601 577.700 625 566.200M643.500 584 667.500 572.500M685.900 590.300 709.900 578.800M728.400 596.700 752.400 585.200M770.800 603 794.800 591.500M813.300 609.300 837.300 597.800M855.700 615.700 879.700 604.200M898.200 622 922.200 610.500M940.700 628.300 964.700 616.800"/>
    </g>
    <path class="rear" d="M182 486 1031 612M200.400 502.800 224.400 492.300M242.900 509.200 266.900 498.700M285.300 515.500 309.300 505M327.800 521.800 351.800 511.300M370.300 528.200 394.300 517.700M412.700 534.500 436.700 524M455.200 540.800 479.200 530.300M497.600 547.200 521.600 536.700M540.100 553.500 564.100 543M582.500 559.800 606.500 549.300M625 566.200 649 555.700M667.500 572.500 691.500 562M709.900 578.800 733.900 568.300M752.400 585.200 776.400 574.700M794.800 591.500 818.800 581M837.300 597.800 861.300 587.300M879.700 604.200 903.700 593.700M922.200 610.500 946.200 600M964.700 616.800 988.600 606.300"/>
    <path class="vert" d="M200.500 322V503M243 328V509M285.500 334.500V515.500M328 341V522M370.500 347V528M413 353.500V534.500M455.500 360V541M498 366V547M540.500 372.500V553.500M583 379V560M625.500 385V566M668 391.500V572.500M710 398V579M752.500 404V585M795 410.500V591.500M837.500 417V598M880 423V604M922.500 429.500V610.500M965 436V617"/>
    <path class="edge" d="M158 360.500 200 368 243 376.700 285 385.500 328 392 668 443.700 837 469 880 474.300 922 478.300 965 482.300 1007 487M158 406 1007 532.500M158 406 200 414 243 425 285 438.500M158 451 200 459 243 470.500 285 486.500M540 477 625 489.500M540 524.500 625 537M880 527.500 922 526 965 528.500 1007 532.500M880 575 922 571 965 573.500 1007 577.500"/>
    <g class="hole"><path d="M285 438.500 540.500 477V524.500L285 486.500Z"/><path d="M625 489.500 880 527.500V575L625 537Z"/></g>
    <path class="edge strong" d="M182 304 1031 431M158 315.500 1007 442M133.500 326 983 453M158 496.500 1007 623M134 508 983 634.500M158 315V497M1007 442V623"/>
    <path class="ghost" d="M186 351.500 228.500 357V404L186 398ZM176 337 186 351M140 330.500 175 335.500 228.500 315.500 190 309M140 512 182 518.500 212 505 160 498"/>
    <path class="holeline" d="M281 433.500 544.500 472.500V529M281 433.500V490.500L544.500 529M620.500 485 884 524.500V580M620.500 485V541.500L884 580"/>
    <path class="rigid faint" d="M179 317 158 406 182 486 158 496.500"/>
    <path class="rigid" d="M158 315.500 182 304 179 317M158 406 133.500 326 158 315.500V496.500L134 508 158 406M1007 532.500 983 453 1031 431 1007 532.500 1031 612 983 634.500 1007 532.500M1007 442V623"/>
    <g class="nodes"><circle cx="182" cy="304" r="2.500"/><circle cx="158" cy="315.500" r="2.500"/><circle cx="133.500" cy="326" r="2.500"/><circle cx="158" cy="496.500" r="2.500"/><circle cx="134" cy="508" r="2.500"/><circle cx="182" cy="486" r="2.500" opacity=".35"/><circle cx="1031" cy="431" r="2.500"/><circle cx="1007" cy="442" r="2.500"/><circle cx="983" cy="453" r="2.500"/><circle cx="1031" cy="612" r="2.500"/><circle cx="1007" cy="623" r="2.500"/><circle cx="983" cy="634.500" r="2.500"/><circle cx="285" cy="438.500" r="2.500"/><circle cx="285" cy="486.500" r="2.500"/><circle cx="540" cy="477" r="2.500"/><circle cx="540" cy="524.500" r="2.500"/><circle cx="625" cy="489.500" r="2.500"/><circle cx="625" cy="537" r="2.500"/><circle cx="880" cy="527.500" r="2.500"/><circle cx="880" cy="575" r="2.500"/></g>
    <path d="M156 404H160V408H156ZM1005 530.500H1009V534.500H1005Z" fill="#f00"/>
  </svg>
  <p class="mode">Visibility mode</p>
  <svg class="cube" viewBox="0 0 420 360" role="img" aria-label="View cube">
    <path d="M75 98 180 53 358 80 255 127Z" fill="#858282"/>
    <path d="M75 98 255 127 253 325 76 297Z" fill="#cbcbcb"/>
    <path d="M255 127 358 80 357 275 253 325Z" fill="#a4a2a2"/>
    <g fill="none" stroke="#777373" stroke-width="5"><path d="M120 108V304M209 122V318M76 152 254 179 357 131M76 250 254 276 357 231"/><path d="M254 127V325M280 116V312M331 92V288M76 99 255 127 357 81" stroke-width="4"/><path d="M120 105 226 60M209 119 311 73M103 87 281 115M153 64 331 92" stroke-width="3"/></g>
    <text x="143" y="231" fill="#33bb3d">-Y</text>
    <text transform="matrix(.62 -.22 0 1 290 226)" fill="#e04343">-X</text>
    <text transform="matrix(1.100 .17 -.7 .35 191 96)" fill="#35358c">-Z</text>
  </svg>
  <svg class="triad" viewBox="90 25 240 190" role="img" aria-label="Axes X Y Z">
    <path d="M180 50 255 62" stroke="#d80000" stroke-width="8"/><path d="M252 51 285 67 252 74Z" fill="#f00"/>
    <path d="M180 50 140 69" stroke="#0f0" stroke-width="8"/><path d="M143 60 120 75 128 84 147 78Z" fill="#0e0"/>
    <path d="M180 55V140" stroke="#00008b" stroke-width="8"/><path d="M170 136H190L180 166Z" fill="#000075"/>
    <circle cx="180" cy="49" r="10" fill="#ffee00"/>
    <text x="299" y="81" fill="#f00">X</text><text x="95" y="94" fill="#0c0">Y</text><text x="170" y="207" fill="#00008b">Z</text>
  </svg>
</main>

<footer class="status">
  <button class="tog on">SNAP</button><button class="tog">GRID</button><button class="tog on">LGRID</button><button class="tog on">OSNAP</button>
  <span class="cell info">Visibility mode</span><span class="cell message"></span><span class="cell system">CS: Global XYZ</span><span class="cell plane">Plane: YZ</span><span class="cell coord"></span><span class="cell coord"></span><span class="cell coord"></span>
  <span class="cell grip"><svg viewBox="0 0 10 10"><path d="M7 0H9V2H7ZM7 3H9V5H7ZM4 3H6V5H4ZM7 6H9V8H7ZM4 6H6V8H4ZM1 6H3V8H1Z"/></svg></span>
</footer>
</div>
</body>
</html>
```
FILE: styles.css
```css
* { box-sizing: border-box; }
body { margin: 0; font: 11px/16px "Open Sans", "Noto Sans", sans-serif; color: #000; }
button, select { font: inherit; color: inherit; background: none; border: 0; padding: 0; margin: 0; }
svg { display: block; }
.defs { position: absolute; }
.window { display: flex; flex-direction: column; height: 100vh; border: 1px solid #6d6d6d; background: #f7f7f7; overflow: hidden; }

.titlebar { display: flex; align-items: center; height: 30px; background: #fff; flex: none; padding-left: 8px; }
.titlebar h1 { margin: 0 auto 0 5px; font-size: 11px; font-weight: 400; white-space: nowrap; }
.appicon { width: 16px; height: 16px; }
.winbtns { display: flex; }
.winbtns button { width: 46px; height: 30px; display: grid; place-items: center; }
.winbtns svg { width: 12px; height: 12px; fill: none; stroke: #000; }

.menubar { display: flex; align-items: center; height: 20px; flex: none; white-space: nowrap; }
.docicon { width: 17px; height: 12px; }
.menubar button { padding: 0 8px; }
.license { margin-left: auto; padding-right: 8px; }
.menubar .mdi { width: 18px; padding: 0; display: grid; place-items: center; }
.mdi svg { width: 10px; height: 10px; fill: none; stroke: #333; }

.toolbar { display: flex; height: 28px; flex: none; border-top: 1px solid #e3e3e3; }
.group { display: flex; align-items: center; flex: none; padding: 0 0 1px 10px; position: relative; }
.group + .group { border-left: 1px solid #dcdcdc; }
.group::before { content: ""; position: absolute; left: 4px; top: 4px; bottom: 4px; border-left: 2px dotted #b5b5b5; }
.ic { width: 26px; height: 24px; flex: none; display: grid; place-items: center; }
.ic svg { width: 22px; height: 22px; }
.narrow { width: 24px; }
.dd { width: 12px; height: 24px; display: grid; place-items: center start; flex: none; }
.dd svg { width: 9px; height: 11px; fill: #222; }
.dd.off svg { fill: #888; }
.sep { width: 7px; height: 18px; flex: none; background: linear-gradient(#d4d4d4, #d4d4d4) center / 1px 100% no-repeat; }
.ov { width: 12px; height: 24px; display: grid; place-items: center; flex: none; }
.ov svg { width: 8px; height: 7px; }
.spaced { margin-left: 10px; }
.on, .split { background: #c5e1f7; box-shadow: inset 0 0 0 1px #90c8f3; }
.split { display: flex; width: 36px; }
.split .ic { width: 24px; border-right: 1px solid #90c8f3; }
.tiny { font: bold 9px "Liberation Sans", sans-serif; }
.xx { font: bold 10px "Liberation Sans", sans-serif; }
.xs { font: bold 9px "Liberation Sans", sans-serif; fill: #777; }
.axis { font: bold 12px "Liberation Sans", sans-serif; }
.num { font: bold 10px "Liberation Sans", sans-serif; }

.combo { display: flex; align-items: center; background: #e8e8f4; height: 20px; padding: 0 5px; }
.combo select { appearance: none; flex: 1; min-width: 0; height: 20px; }
.swatch { width: 11px; height: 11px; background: #ccffff; margin-right: 3px; flex: none; }
.badge { background: #c0504d; color: #fff; font-weight: 400; line-height: 13px; width: 30px; text-align: center; margin-right: 5px; }
.lc { width: 133px; margin-right: 1px; }
.dots { border-left: 1px solid #fff; padding: 0 6px; }
.cs { width: 120px; }
.cs .swatch { margin-right: 5px; }
.chev { width: 10px; height: 10px; fill: none; stroke: #444; flex: none; }
.step { width: 15px; height: 20px; margin-right: 1px; background: #e8e8f4; display: grid; place-items: center; flex: none; }
.step svg { width: 6px; height: 8px; }

.canvas { flex: 1; min-height: 0; background: #fff; position: relative; overflow: hidden; }
.model { width: 100%; height: 100%; }
.mode { position: absolute; left: 5px; top: 5px; margin: 0; }
.cube { position: absolute; right: 0; top: 5px; width: 140px; height: 120px; }
.cube text { font: bold 42px "Liberation Sans", sans-serif; }
.triad { position: absolute; left: 29px; bottom: 4px; width: 80px; height: 64px; }
.triad text { font: 30px "Open Sans", sans-serif; }
.rib, .rear, .vert, .edge { fill: none; stroke-width: 1; }
.rib { stroke: #6f7578; }
.rear { stroke: #6f99b2; }
.vert { stroke: #858b90; }
.edge { stroke: #6b7175; }
.strong { stroke: #5c6164; }
.hole { fill: #fff; stroke: #5c5c5c; }
.holeline { fill: none; stroke: #008080; stroke-width: 2; stroke-dasharray: 8 4 2 4; }
.ghost { fill: none; stroke: #c6c6c6; stroke-dasharray: 1 1; }
.rigid { fill: none; stroke: #f0f; stroke-width: 2; stroke-dasharray: 10 4; }
.faint { stroke: #d6a8f6; }
.nodes { fill: #004c80; }

.status { display: flex; justify-content: flex-end; align-items: center; height: 23px; padding-top: 1px; flex: none; white-space: nowrap; }
.tog { height: 19px; padding: 0 3px; margin-right: 1px; border: 1px solid transparent; }
.tog.on { background: #ebebeb; border-color: #b5b5b5 #f2f2f2 #f2f2f2 #b5b5b5; box-shadow: none; }
.cell { border-left: 1px solid #d5d5d5; height: 19px; line-height: 19px; padding-left: 4px; flex: none; }
.info { width: 89px; }
.message { width: 106px; }
.system { width: 156px; }
.plane { width: 66px; }
.coord { width: 76px; }
.grip { width: 19px; padding: 9px 0 0 6px; }
.grip svg { width: 10px; height: 10px; fill: #bbb; }
```
